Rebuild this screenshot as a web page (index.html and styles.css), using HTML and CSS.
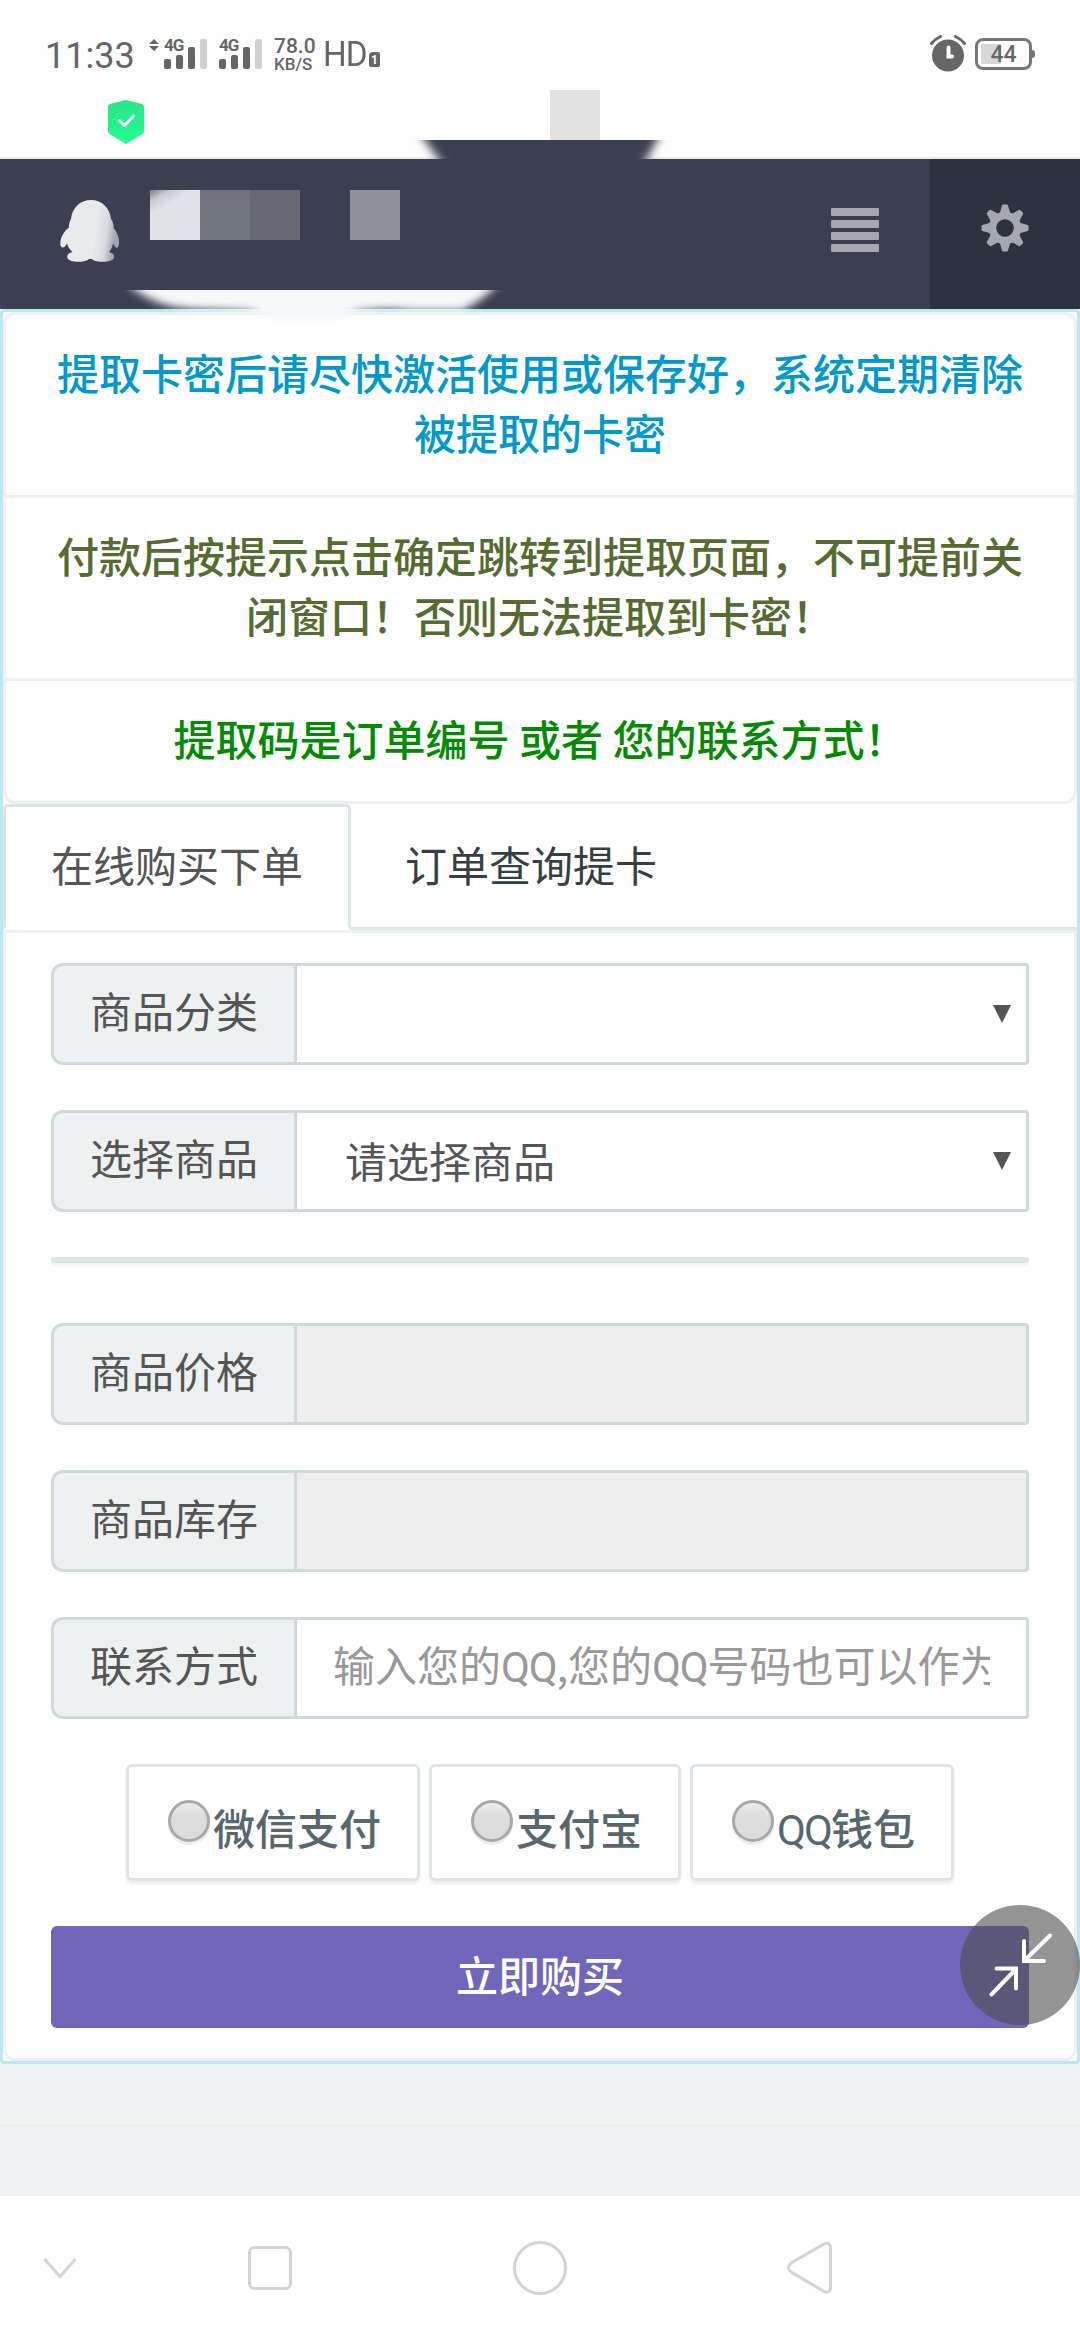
FILE: index.html
```html
<!DOCTYPE html>
<html lang="zh-CN">
<head>
  <meta charset="UTF-8" />
  <meta name="viewport" content="width=device-width, initial-scale=1.0"/>
  <title>在线购买下单</title>
  <link rel="stylesheet" href="styles.css">
</head>
<body>

  <div class="status-bar">
    <span class="time">11:33</span>
    <svg class="arrows" width="10" height="12" viewBox="0 0 10 12"><path d="M0 5L5 0l5 5zM0 7h10l-5 5z"/></svg>
    <div class="signal">
      <span>4G</span>
      <svg width="44" height="30" viewBox="0 0 44 30">
        <rect x="0" y="20" width="7" height="10" rx="2"/>
        <rect x="12" y="16" width="7" height="14" rx="2"/>
        <rect x="24" y="8" width="7" height="22" rx="2"/>
        <rect class="off" x="36" y="0" width="7" height="30" rx="2"/>
      </svg>
    </div>
    <div class="signal second">
      <span>4G</span>
      <svg width="44" height="30" viewBox="0 0 44 30">
        <rect x="0" y="20" width="7" height="10" rx="2"/>
        <rect x="12" y="16" width="7" height="14" rx="2"/>
        <rect x="24" y="8" width="7" height="22" rx="2"/>
        <rect class="off" x="36" y="0" width="7" height="30" rx="2"/>
      </svg>
    </div>
    <div class="speed"><b>78.0</b><span>KB/S</span></div>
    <span class="hd">HD</span>
    <span class="sim">1</span>
    <svg class="alarm" width="36" height="37" viewBox="0 0 36 37">
      <circle cx="18" cy="20.500" r="16"/>
      <path class="bell" d="M1.500 8.500Q5 4 10.500 1.500M34.500 8.500Q31 4 25.500 1.500"/>
      <path class="hand" d="M18.500 12.500v9h3.500"/>
    </svg>
    <div class="battery"><span>44</span></div>
  </div>

  <div class="address-bar">
    <svg class="shield" width="36" height="44" viewBox="0 0 36 44">
      <defs>
        <linearGradient id="green" x1="0" y1="0" x2="0" y2="1">
          <stop offset="0" stop-color="#2be28a"/>
          <stop offset="1" stop-color="#20ff90"/>
        </linearGradient>
      </defs>
      <path fill="url(#green)" d="M18 0L34 4Q36 4.500 36 6.500V31Q36 33 34.500 34L18 44 1.500 34Q0 33 0 31V6.500Q0 4.500 2 4z"/>
      <path class="check" d="M11.500 20.500l5 5 9-9.500"/>
    </svg>
    <span class="title-block"></span>
    <svg class="smudge-top" width="300" height="19" viewBox="400 140 300 19">
      <path d="M410 120L450 175H638L668 120z"/>
    </svg>
  </div>

  <header class="navbar">
    <svg class="penguin" width="60" height="62" viewBox="0 0 60 62">
      <defs>
        <linearGradient id="body" x1="0" y1="0" x2="1" y2="0.150">
          <stop offset="0.650" stop-color="#e9eaec"/>
          <stop offset="0.850" stop-color="#d9dade"/>
          <stop offset="1" stop-color="#a3a5b0"/>
        </linearGradient>
      </defs>
      <path fill="url(#body)" d="M31 0C42 0 50 8 51 19C53 22 54 25 53.500 28C57 32 59.500 38 59 44C58.500 48 56.500 49 54.500 46L53 43.500C52.500 47 51 50 49 52C53 53 54.500 55 54 57.500C53 62 41 63 34 60.500Q30 57 27 60.500C20 63 9 62 7.500 58C6.500 55 8.500 53 12.500 52C10 50 8 47 7 43.500L5 46.500C3 48.500 .500 47.500 .300 44C0 38 4 31 9 27.500C8.500 25 9.500 22 11 19C12 8 20 0 31 0z"/>
    </svg>
    <div class="brand">
      <span class="b1"></span><span class="b2"></span><span class="b3"></span><span class="b4"></span>
    </div>
    <div class="menu"><i></i><i></i><i></i><i></i></div>
    <div class="settings">
      <svg width="48" height="48" viewBox="-24 -24 48 48">
        <g id="teeth">
          <path id="tooth" d="M-5.500-14L-3-22.500Q-2.700-23.500-1.700-23.500H1.700Q2.700-23.500 3-22.500L5.500-14z"/>
          <use href="#tooth" transform="rotate(45)"/>
          <use href="#tooth" transform="rotate(90)"/>
          <use href="#tooth" transform="rotate(135)"/>
          <use href="#tooth" transform="rotate(180)"/>
          <use href="#tooth" transform="rotate(225)"/>
          <use href="#tooth" transform="rotate(270)"/>
          <use href="#tooth" transform="rotate(315)"/>
        </g>
        <circle class="ring" r="12.500"/>
      </svg>
    </div>
    <svg class="smudge-bottom" width="460" height="40" viewBox="80 290 460 40">
      <path d="M118 276H508L480 300L462 311H412Q382 307 358 312L345 318H265L248 311L190 309Q150 307 118 276z"/>
    </svg>
  </header>

  <main class="panel">
    <ul class="notice">
      <li class="blue">提取卡密后请尽快激活使用或保存好，系统定期清除被提取的卡密</li>
      <li class="olive">付款后按提示点击确定跳转到提取页面，不可提前关闭窗口！否则无法提取到卡密！</li>
      <li class="green">提取码是订单编号 或者 您的联系方式！</li>
    </ul>

    <nav class="tabs">
      <a class="tab active">在线购买下单</a>
      <a class="tab">订单查询提卡</a>
    </nav>

    <section class="form">
      <div class="row">
        <label>商品分类</label>
        <div class="field select"></div>
      </div>
      <div class="row">
        <label>选择商品</label>
        <div class="field select">请选择商品</div>
      </div>
      <hr>
      <div class="row">
        <label>商品价格</label>
        <div class="field disabled"></div>
      </div>
      <div class="row">
        <label>商品库存</label>
        <div class="field disabled"></div>
      </div>
      <div class="row">
        <label>联系方式</label>
        <div class="field"><p class="placeholder">输入您的<span class="qq">QQ</span>,您的<span class="qq">QQ</span>号码也可以作为</p></div>
      </div>
      <div class="payments">
        <div class="pay"><i class="radio"></i><span>微信支付</span></div>
        <div class="pay"><i class="radio"></i><span>支付宝</span></div>
        <div class="pay"><i class="radio"></i><span><span class="qq">QQ</span>钱包</span></div>
      </div>
      <button class="buy">立即购买</button>
    </section>
  </main>

  <footer></footer>

  <div class="system-nav">
    <svg width="1080" height="144" viewBox="0 2196 1080 144">
      <path d="M44.500 2259L60 2276.500L75.500 2259"/>
      <rect x="249.500" y="2247.500" width="41" height="41" rx="5"/>
      <circle cx="540" cy="2268" r="25.500"/>
      <path d="M824 2244L791 2263Q786 2267.500 791 2272L824 2291.500Q830.500 2294 830.500 2287V2249Q830.500 2241 824 2244z"/>
    </svg>
  </div>

  <div class="shrink">
    <svg width="120" height="120" viewBox="960 1905 120 120">
      <path d="M991.500 1994.500L1016 1969M996.500 1968.500H1016V1988.500M1050 1935.500L1025 1960M1024 1941V1961H1044"/>
    </svg>
  </div>

</body>
</html>
```
FILE: styles.css
```css
* {
  box-sizing: border-box;
}

body {
  font-family: "Noto Sans CJK SC", sans-serif;
  font-size: 42px;
  line-height: 60px;
  margin: 0;
  width: 1080px;
  height: 2340px;
  position: relative;
  overflow: hidden;
  color: #555;
  background-color: #fefefe;
}

svg {
  display: block;
}

/* phone status bar */
.status-bar {
  display: flex;
  align-items: flex-start;
  height: 85px;
  padding: 35px 45px 0 45px;
  font-family: Roboto, sans-serif;
  color: #666;
  fill: #666;
}

.time {
  width: 104px;
  padding-top: 1px;
  font-size: 36px;
  line-height: 40px;
}

.arrows {
  margin: 4px 5px 0 0;
}

.signal {
  position: relative;
  width: 55px;
  padding-top: 4px;
}

.signal span {
  position: absolute;
  top: 2px;
  left: 0;
  font-size: 17px;
  font-weight: 700;
  line-height: 17px;
  letter-spacing: -1px;
}

.signal .off {
  fill: #d0d0d0;
}

.speed {
  width: 49px;
  display: flex;
  flex-direction: column;
  padding-top: 1px;
}

.speed b {
  font-size: 21px;
  font-weight: 500;
  line-height: 20px;
}

.speed span {
  font-size: 17px;
  font-weight: 500;
  line-height: 16px;
}

.hd {
  width: 47px;
  font-size: 35px;
  line-height: 40px;
  letter-spacing: -1px;
  transform: scaleX(0.95);
  transform-origin: left;
}

.sim {
  width: 11px;
  height: 15px;
  margin: 17px auto 0 -1px;
  border-radius: 4px 2px 2px 2px;
  background-color: #666;
  color: #fff;
  font-size: 12px;
  font-weight: 700;
  line-height: 16px;
  text-align: center;
}

.alarm {
  margin-right: 9px;
}

.alarm .bell,
.alarm .hand {
  fill: none;
  stroke: #666;
  stroke-width: 3;
  stroke-linecap: round;
}

.alarm .hand {
  stroke: #fff;
  stroke-width: 4;
}

.battery {
  position: relative;
  width: 57px;
  height: 32px;
  margin: 3px 3px 0 0;
  border: 3px solid #777;
  border-radius: 8px;
  background: linear-gradient(#d8d8d8, #d8d8d8) 3px 3px / 20px 20px no-repeat;
  font-size: 23px;
  font-weight: 500;
  line-height: 27px;
  text-align: center;
}

.battery::after {
  content: "";
  position: absolute;
  top: 9px;
  right: -6px;
  width: 3px;
  height: 8px;
  border-radius: 0 3px 3px 0;
  background-color: #777;
}

.address-bar {
  position: relative;
  display: flex;
  height: 74px;
  padding-left: 108px;
  border-bottom: 2px solid #ececec;
}

.shield {
  margin-top: 15px;
}

.shield .check {
  fill: none;
  stroke: #fff;
  stroke-width: 3;
  stroke-linecap: round;
  stroke-linejoin: round;
}

.title-block {
  width: 50px;
  height: 50px;
  margin: 5px 0 0 406px;
  background-color: #e2e2e2;
}

.smudge-top {
  position: absolute;
  left: 400px;
  top: 55px;
  overflow: hidden;
}

.smudge-top path {
  fill: #3b3f51;
  filter: blur(5px);
}

/* site header */
.navbar {
  position: relative;
  z-index: 1;
  display: flex;
  height: 150px;
  padding-left: 60px;
  background-color: #3b3f51;
}

.penguin {
  margin-top: 41px;
}

.brand {
  display: flex;
  margin: 31px 0 0 30px;
}

.brand span {
  width: 50px;
  height: 50px;
}

.b1 { background: linear-gradient(150deg, #777a87 0, #c9cbd1 15%, #e0e2e7 32%); }
.b2 { background: linear-gradient(#70717f, #737780 40%); }
.b3 { background-color: #666876; }
.brand .b4 { margin-left: 50px; background-color: #8e909c; }

.menu {
  display: flex;
  flex-direction: column;
  gap: 4px;
  width: 48px;
  margin: 49px 51px 0 auto;
}

.menu i {
  height: 8px;
  border-radius: 1px;
  background-color: #a5a7b1;
}

.settings {
  width: 150px;
  padding: 45px 0 0 51px;
  background-color: #2d3241;
  fill: #a5a7b1;
}

.settings .ring {
  fill: none;
  stroke: #a5a7b1;
  stroke-width: 7.500;
}

.smudge-bottom {
  position: absolute;
  left: 80px;
  top: 131px;
  overflow: hidden;
}

.smudge-bottom path {
  fill: #f8f9fb;
  filter: blur(4px);
}

/* content */
.panel {
  height: 1755px;
  border: 3px solid #bce8f1;
  border-radius: 4px;
  background-color: #fff;
  box-shadow: 0 3px 4px rgba(0, 0, 0, 0.06);
}

.notice {
  list-style: none;
  margin: 0;
  padding: 0;
  border: 3px solid #edf1f2;
  border-radius: 12px;
  text-align: center;
  font-weight: 500;
}

.notice li {
  padding: 27px 45px 33px;
}

.notice li + li {
  border-top: 3px solid #edf1f2;
}

.blue { color: #0099cc; }
.olive { color: #556b2f; }
.green { color: #008b00; }

.tabs {
  display: flex;
  gap: 6px;
  height: 126px;
  border-bottom: 3px solid #dde6e9;
}

.tab {
  height: 126px;
  padding: 27px 45px 33px;
  border: 3px solid transparent;
  border-radius: 5px 5px 0 0;
  color: #363f45;
}

.tab.active {
  border-color: #dde6e9;
  border-bottom-color: #fff;
  color: #555;
  background-color: #fff;
}

.form {
  height: 1131px;
  padding: 30px 45px 0;
  border: 3px solid #edf1f2;
  border-radius: 0 0 12px 12px;
}

.row {
  display: flex;
  height: 102px;
  margin-bottom: 45px;
}

.row label {
  width: 243px;
  padding: 14px 0 0 36px;
  border: 3px solid #cfdadd;
  border-right: none;
  border-radius: 12px 0 0 12px;
  background-color: #edf1f2;
}

.field {
  flex: 1;
  padding: 14px 36px;
  border: 3px solid #cfdadd;
  border-radius: 0 4px 4px 0;
}

.select {
  display: flex;
  align-items: center;
  justify-content: space-between;
  padding: 0 15px 2px 48px;
}

/* dropdown arrow */
.select::after {
  content: "";
  margin: 2px 0 0 auto;
  border: 9px solid transparent;
  border-top: 18px solid #555;
  border-bottom: 0;
}

.disabled {
  background-color: #eee;
}

.placeholder {
  margin: 0;
  width: 657px;
  overflow: hidden;
  white-space: nowrap;
  color: #999;
}

/* latin letters are narrower than the CJK font's own */
.qq {
  font-family: Roboto, sans-serif;
  letter-spacing: -1.200px;
}

hr {
  height: 6px;
  margin: 0 0 60px;
  border: none;
  border-radius: 3px;
  background-color: #dee5e7;
  box-shadow: 0 3px 3px rgba(0, 0, 0, 0.05);
}

.payments {
  display: flex;
  justify-content: center;
  gap: 9px;
  margin-bottom: 45px;
  font-weight: 500;
  color: #58666e;
}

.payments .qq {
  font-weight: 400;
  letter-spacing: -1.900px;
}

.pay {
  display: flex;
  height: 117px;
  padding: 33px 36px 0 39px;
  border: 3px solid #dee5e7;
  border-radius: 6px;
  box-shadow: 0 3px 3px rgba(90, 90, 90, 0.1);
}

.pay > span {
  margin-top: -3px;
}

.radio {
  width: 42px;
  height: 42px;
  margin-right: 3px;
  border: 3px solid #a8a8a8;
  border-radius: 50%;
  background: linear-gradient(#ececec, #dcdcdc 40%);
  box-shadow: 0 3px 1px rgba(0, 0, 0, 0.08);
}

.buy {
  display: block;
  width: 100%;
  height: 102px;
  padding: 0 0 6px;
  border: none;
  border-radius: 6px;
  background-color: #7266ba;
  color: #fff;
  font: inherit;
  font-weight: 500;
}

footer {
  height: 132px;
  background: linear-gradient(#eee, #eee) 0 60px / 100% 3px no-repeat #eef2f3;
}

.system-nav {
  height: 144px;
  background-color: #fefefe;
}

.system-nav svg {
  fill: none;
  stroke: #d4d4d4;
  stroke-width: 3;
}

/* floating button over the page */
.shrink {
  position: absolute;
  left: 960px;
  top: 1905px;
  width: 120px;
  height: 120px;
  border-radius: 50%;
  background-color: rgba(77, 77, 77, 0.6);
}

.shrink path {
  fill: none;
  stroke: #fff;
  stroke-width: 4;
  stroke-linecap: round;
}
```
